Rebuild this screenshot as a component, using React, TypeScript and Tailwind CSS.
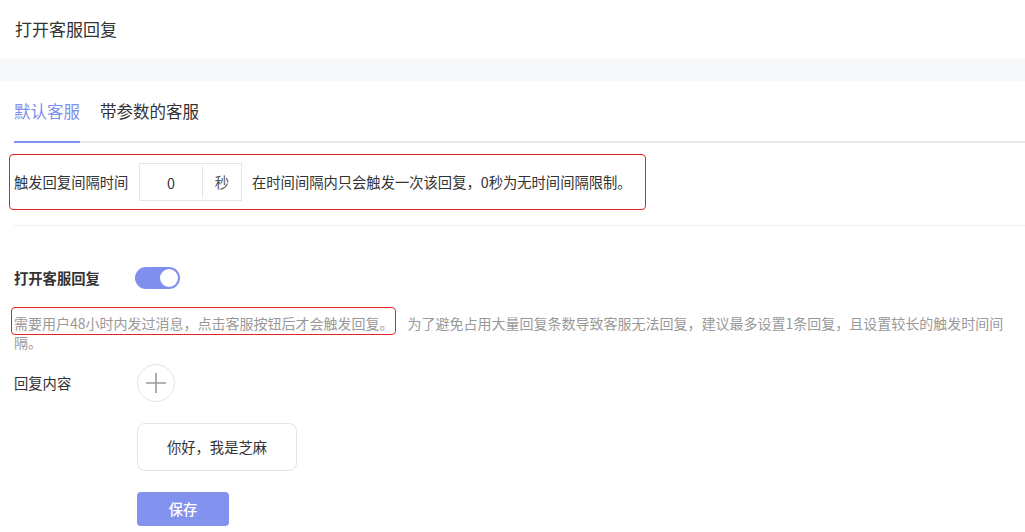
import { useState } from "react";

export default function App() {
  const [tab, setTab] = useState(0);
  const [enabled, setEnabled] = useState(true);
  const [interval, setInterval] = useState("0");

  const tabs = ["默认客服", "带参数的客服"];

  return (
    <div className="min-h-screen bg-white font-['Noto_Sans_CJK_SC','Noto_Sans',sans-serif] text-[#333]">
      {/* Header */}
      <div className="h-[58px] flex items-center pl-[15px] text-[17px] text-[#333]">
        打开客服回复
      </div>
      <div className="h-[23px] bg-[#f7f8fa]" />

      <div className="pl-[14px]">
        {/* Tabs */}
        <div className="flex gap-[20px] border-b-2 border-[#e8e8e8]">
          {tabs.map((t, i) => (
            <button
              key={t}
              onClick={() => setTab(i)}
              className={`h-[62px] -mb-[2px] flex items-center text-[16.5px] border-b-2 ${
                tab === i
                  ? "text-[#8090ee] border-[#8090ee]"
                  : "text-[#333] border-transparent"
              }`}
            >
              {t}
            </button>
          ))}
        </div>

        {/* Interval */}
        <div className="mt-[11px] -ml-[5px] w-[637px] h-[56px] border border-[#e52222] rounded-[4px] flex items-center pl-[4px] text-[14.3px]">
          <div className="w-[125px]">触发回复间隔时间</div>
          <div className="w-[103px] h-[38px] border border-[#e6e6e6] flex items-center">
            <input
              value={interval}
              onChange={(e) => setInterval(e.target.value)}
              className="w-[62px] h-full text-center outline-none text-[14.3px] text-[#333]"
            />
            <div className="flex-1 h-[32px] border-l border-[#e6e6e6] flex items-center justify-center text-[#555]">
              秒
            </div>
          </div>
          <div className="ml-[10px]">在时间间隔内只会触发一次该回复，0秒为无时间间隔限制。</div>
        </div>

        <div className="mt-[15px] border-t border-[#eeeeee]" />

        {/* Toggle */}
        <div className="mt-[41px] flex items-center">
          <div className="w-[121px] text-[14.3px] font-bold">打开客服回复</div>
          <button
            onClick={() => setEnabled(!enabled)}
            className={`w-[45px] h-[22px] rounded-full flex items-center px-[2px] ${
              enabled ? "bg-[#7e8fed] justify-end" : "bg-[#ccc] justify-start"
            }`}
          >
            <span className="w-[18px] h-[18px] rounded-full bg-white" />
          </button>
        </div>

        <p className="mt-[25px] text-[14px] leading-[19px] text-[#999]">
          <span className="inline-block -ml-[3px] -mt-[7px] -mb-[2px] pl-[2px] pr-[1px] pt-[6px] pb-[1px] border border-[#e52222] rounded-[4px]">
            需要用户48小时内发过消息，点击客服按钮后才会触发回复。
          </span>
          <span className="ml-[12px]">
            为了避免占用大量回复条数导致客服无法回复，建议最多设置1条回复，且设置较长的触发时间间隔。
          </span>
        </p>

        {/* Reply content */}
        <div className="mt-[12px] flex items-center">
          <div className="w-[123px] text-[14.3px]">回复内容</div>
          <button className="w-[38px] h-[38px] rounded-full border border-[#e3e3e3] flex items-center justify-center">
            <svg width="20" height="20" viewBox="0 0 20 20">
              <path d="M10 0v20M0 10h20" stroke="#999" strokeWidth="1.6" />
            </svg>
          </button>
        </div>

        <div className="mt-[21px] ml-[123px] w-[160px] h-[48px] rounded-[8px] border border-[#e5e5e5] flex items-center justify-center text-[14.3px] text-[#333]">
          你好，我是芝麻
        </div>

        <button className="mt-[21px] ml-[123px] w-[92px] h-[34px] rounded-[4px] bg-[#8192ef] text-white text-[14.3px] font-medium">
          保存
        </button>
      </div>
    </div>
  );
}
